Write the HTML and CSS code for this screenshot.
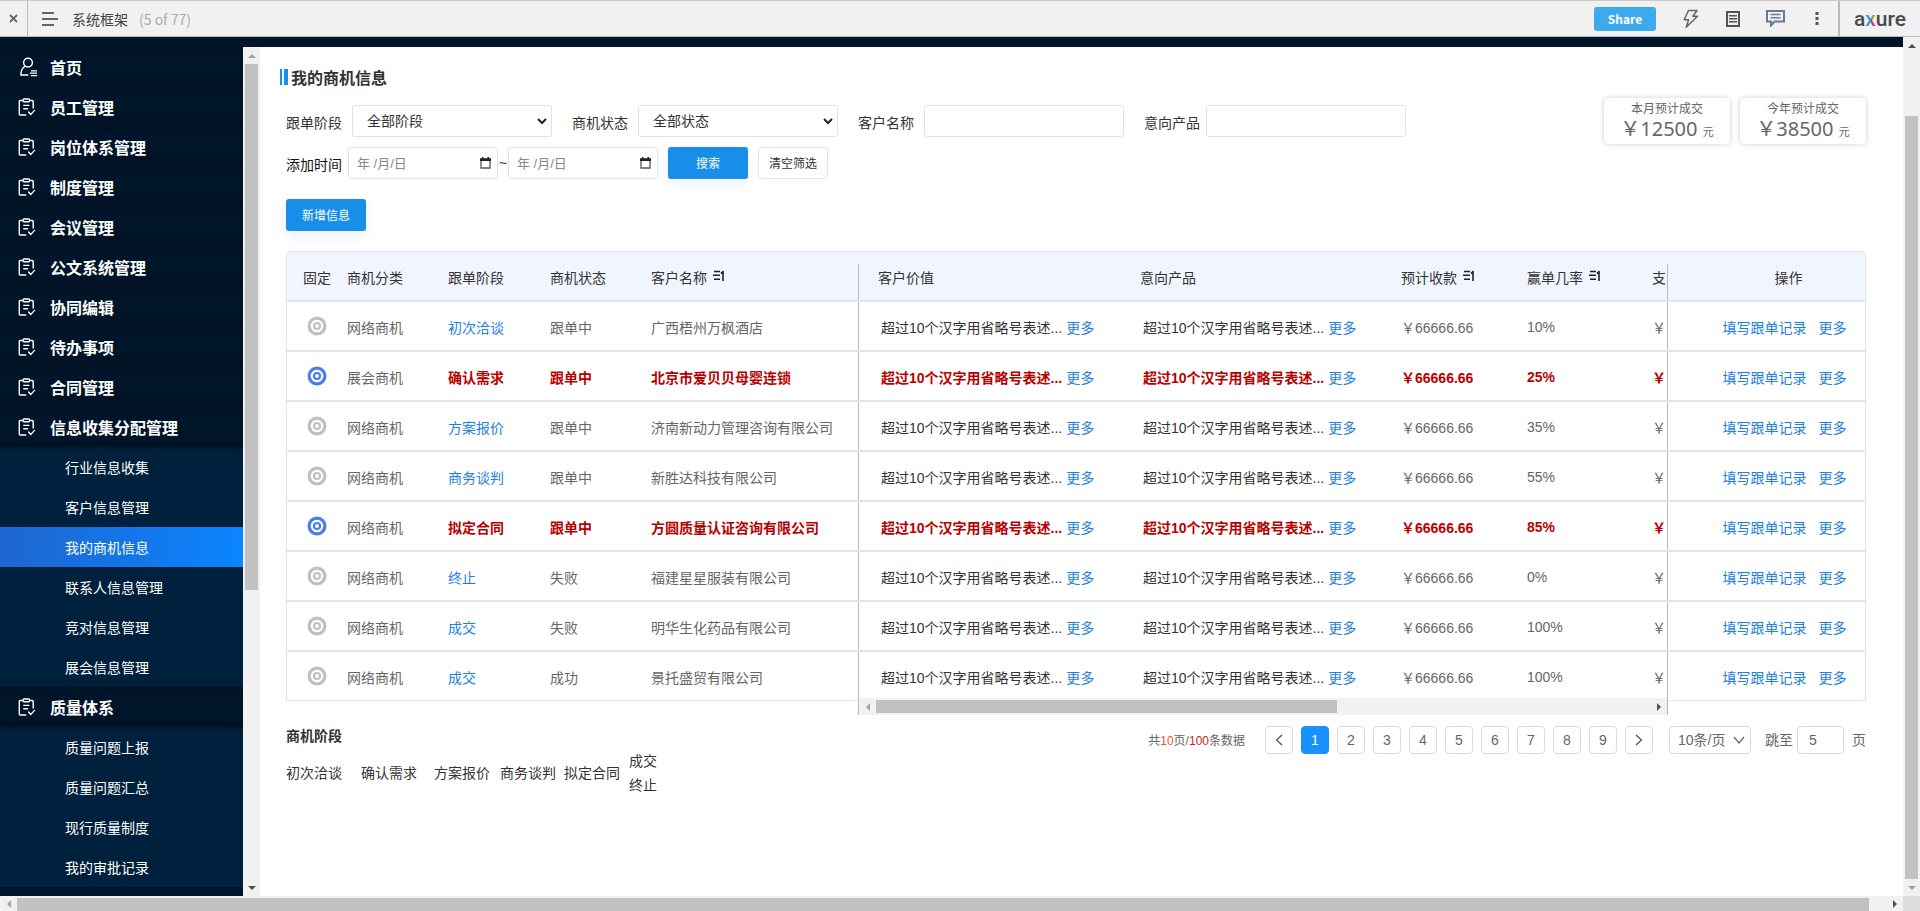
FILE: index.html
```html
<!DOCTYPE html>
<html lang="zh-CN">
<head>
<meta charset="utf-8">
<title>系统框架</title>
<link rel="stylesheet" href="styles.css">
</head>
<body>
<svg class="defs" aria-hidden="true">
  <symbol id="i-task" viewBox="0 0 18 18">
    <g fill="none" stroke="#fff" stroke-width="1.4" stroke-linecap="round" stroke-linejoin="round">
      <path d="M4.500 2.500H2.200Q1.300 2.500 1.300 3.400V16q0 1 .9 1H7.800M12 2.500h2.300q.9 0 .9.9V10"/>
      <rect x="5" y="1" width="6.600" height="2.800" rx="1"/>
      <path d="M5.800 7.400h5M5.800 10.800h3.600M10.600 14l2.300 2.400 3.600-4"/>
    </g>
  </symbol>
  <symbol id="i-pin" viewBox="0 0 20 20">
    <g fill="none" stroke="currentColor">
      <circle cx="10" cy="10" r="7.900" stroke-width="3.200"/>
      <circle cx="10" cy="10" r="3" stroke-width="2.200"/>
    </g>
  </symbol>
  <symbol id="i-sort" viewBox="0 0 12 11">
    <path d="M1 1.500h6M0 5.300h7M1 9.200h6M10 11V1.200M10.400 1L8 3.600" fill="none" stroke="#222" stroke-width="1.600"/>
  </symbol>
</svg>

<header class="topbar">
  <button class="close" aria-label="关闭"><svg width="9" height="9" viewBox="0 0 9 9"><path d="M1 1l7 7M8 1l-7 7" stroke="#666" stroke-width="1.800"/></svg></button>
  <button class="menu" aria-label="菜单"><svg width="16" height="14" viewBox="0 0 16 14"><path d="M0 1h12M0 7h16M0 13h12" stroke="#666" stroke-width="2"/></svg></button>
  <span class="doc-name">系统框架</span>
  <span class="doc-count">(5 of 77)</span>
  <div class="tools">
    <button class="share">Share</button>
    <button aria-label="交互"><svg width="18" height="20" viewBox="0 0 18 20"><path d="M6.500 1.500H15L10.800 7.200h4.700L4.200 18.200l2.400-7.400H2.200z" fill="none" stroke="#666" stroke-width="1.500" stroke-linejoin="round"/></svg></button>
    <button aria-label="说明"><svg width="14" height="16" viewBox="0 0 14 16"><path d="M1 1h12v14H1z" fill="none" stroke="#555" stroke-width="2"/><path d="M3 4.800h8M3 7.800h8M3 10.800h8" stroke="#555" stroke-width="1.400"/></svg></button>
    <button aria-label="评论"><svg width="19" height="17" viewBox="0 0 19 17"><path d="M1 1h17v10.500H8.500L5 15.500v-4H1z" fill="none" stroke="#6a7a96" stroke-width="2"/><path d="M4.500 4.600h10M4.500 7.800h10" stroke="#6a7a96" stroke-width="1.500"/></svg></button>
    <button class="dots" aria-label="更多"><svg width="4" height="13" viewBox="0 0 4 13"><path d="M.5 0h3v3h-3zM.5 5h3v3h-3zM.5 10h3v3h-3z" fill="#555"/></svg></button>
  </div>
  <a class="logo" href="#">a<span class="logo-x">x</span>ure</a>
</header>

<div class="frame">
  <div class="page">
    <div class="strip"></div>
    <div class="cols">
      <nav class="side">
        <a class="item" href="#"><svg class="ico user" viewBox="0 0 18 20"><g fill="none" stroke="#fff" stroke-width="1.400" stroke-linecap="round"><circle cx="8" cy="5.600" r="4.400"/><path d="M5.300 9.400Q.9 11.200 .9 18h7"/><path d="M11 13.800h6M10 16.200h7M11 18.600h6" stroke-width="1.200" stroke-linecap="butt"/></g></svg>首页</a>
        <a class="item" href="#"><svg class="ico"><use href="#i-task"/></svg>员工管理</a>
        <a class="item" href="#"><svg class="ico"><use href="#i-task"/></svg>岗位体系管理</a>
        <a class="item" href="#"><svg class="ico"><use href="#i-task"/></svg>制度管理</a>
        <a class="item" href="#"><svg class="ico"><use href="#i-task"/></svg>会议管理</a>
        <a class="item" href="#"><svg class="ico"><use href="#i-task"/></svg>公文系统管理</a>
        <a class="item" href="#"><svg class="ico"><use href="#i-task"/></svg>协同编辑</a>
        <a class="item" href="#"><svg class="ico"><use href="#i-task"/></svg>待办事项</a>
        <a class="item" href="#"><svg class="ico"><use href="#i-task"/></svg>合同管理</a>
        <a class="item" href="#"><svg class="ico"><use href="#i-task"/></svg>信息收集分配管理</a>
        <div class="sub">
          <a href="#">行业信息收集</a>
          <a href="#">客户信息管理</a>
          <a class="active" href="#">我的商机信息</a>
          <a href="#">联系人信息管理</a>
          <a href="#">竞对信息管理</a>
          <a href="#">展会信息管理</a>
        </div>
        <a class="item" href="#"><svg class="ico"><use href="#i-task"/></svg>质量体系</a>
        <div class="sub">
          <a href="#">质量问题上报</a>
          <a href="#">质量问题汇总</a>
          <a href="#">现行质量制度</a>
          <a href="#">我的审批记录</a>
        </div>
      </nav>
      <div class="vbar side-bar"><i class="up off"></i><b></b><i class="down"></i></div>

      <main class="main">
        <h1 class="title"><span class="bars"></span>我的商机信息</h1>
        <div class="top">
          <form class="filters">
            <div class="line">
              <div class="field"><label for="stage">跟单阶段</label><select id="stage"><option>全部阶段</option></select></div>
              <div class="field"><label for="state">商机状态</label><select id="state"><option>全部状态</option></select></div>
              <div class="field"><label for="client">客户名称</label><input id="client" type="text"></div>
              <div class="field tight"><label for="product">意向产品</label><input id="product" type="text"></div>
            </div>
            <div class="line second">
              <div class="field tight"><label class="dark" for="from">添加时间</label><div class="range"><input class="date" id="from" type="text" placeholder="年 /月/日"><span>~</span><input class="date" type="text" placeholder="年 /月/日" aria-label="结束时间"></div></div>
              <button class="btn primary" type="button">搜索</button>
              <button class="btn plain" type="button">清空筛选</button>
            </div>
          </form>
          <div class="cards">
            <section class="card"><h2>本月预计成交</h2><p>￥12500 <small>元</small></p></section>
            <section class="card"><h2>今年预计成交</h2><p>￥38500 <small>元</small></p></section>
          </div>
        </div>
        <button class="btn primary add" type="button">新增信息</button>

        <div class="board">
          <table>
            <colgroup><col class="c1"><col class="c2"><col class="c3"><col class="c2"><col class="c5"><col class="c6"><col class="c7"><col class="c8"><col class="c9"><col class="c10"><col class="c11"></colgroup>
            <thead>
              <tr><th class="pin">固定</th><th>商机分类</th><th>跟单阶段</th><th>商机状态</th><th class="edge">客户名称 <svg class="sort"><use href="#i-sort"/></svg></th><th class="mid">客户价值</th><th class="mid">意向产品</th><th class="mid">预计收款 <svg class="sort"><use href="#i-sort"/></svg></th><th class="mid">赢单几率 <svg class="sort"><use href="#i-sort"/></svg></th><th class="mid edge">支</th><th class="ops">操作</th></tr>
            </thead>
            <tbody>
              <tr><td class="pin"><button aria-label="固定"><svg><use href="#i-pin"/></svg></button></td><td>网络商机</td><td><a href="#">初次洽谈</a></td><td>跟单中</td><td class="edge">广西梧州万枫酒店</td><td class="long">超过10个汉字用省略号表述... <a href="#">更多</a></td><td class="long">超过10个汉字用省略号表述... <a href="#">更多</a></td><td class="mid">￥66666.66</td><td class="mid pct">10%</td><td class="mid edge">￥</td><td class="ops"><a href="#">填写跟单记录</a><a href="#">更多</a></td></tr>
              <tr class="hot"><td class="pin"><button aria-label="取消固定"><svg><use href="#i-pin"/></svg></button></td><td class="calm">展会商机</td><td>确认需求</td><td>跟单中</td><td class="edge">北京市爱贝贝母婴连锁</td><td class="long">超过10个汉字用省略号表述... <a href="#">更多</a></td><td class="long">超过10个汉字用省略号表述... <a href="#">更多</a></td><td class="mid">￥66666.66</td><td class="mid pct">25%</td><td class="mid edge">￥</td><td class="ops"><a href="#">填写跟单记录</a><a href="#">更多</a></td></tr>
              <tr><td class="pin"><button aria-label="固定"><svg><use href="#i-pin"/></svg></button></td><td>网络商机</td><td><a href="#">方案报价</a></td><td>跟单中</td><td class="edge">济南新动力管理咨询有限公司</td><td class="long">超过10个汉字用省略号表述... <a href="#">更多</a></td><td class="long">超过10个汉字用省略号表述... <a href="#">更多</a></td><td class="mid">￥66666.66</td><td class="mid pct">35%</td><td class="mid edge">￥</td><td class="ops"><a href="#">填写跟单记录</a><a href="#">更多</a></td></tr>
              <tr><td class="pin"><button aria-label="固定"><svg><use href="#i-pin"/></svg></button></td><td>网络商机</td><td><a href="#">商务谈判</a></td><td>跟单中</td><td class="edge">新胜达科技有限公司</td><td class="long">超过10个汉字用省略号表述... <a href="#">更多</a></td><td class="long">超过10个汉字用省略号表述... <a href="#">更多</a></td><td class="mid">￥66666.66</td><td class="mid pct">55%</td><td class="mid edge">￥</td><td class="ops"><a href="#">填写跟单记录</a><a href="#">更多</a></td></tr>
              <tr class="hot"><td class="pin"><button aria-label="取消固定"><svg><use href="#i-pin"/></svg></button></td><td class="calm">网络商机</td><td>拟定合同</td><td>跟单中</td><td class="edge">方圆质量认证咨询有限公司</td><td class="long">超过10个汉字用省略号表述... <a href="#">更多</a></td><td class="long">超过10个汉字用省略号表述... <a href="#">更多</a></td><td class="mid">￥66666.66</td><td class="mid pct">85%</td><td class="mid edge">￥</td><td class="ops"><a href="#">填写跟单记录</a><a href="#">更多</a></td></tr>
              <tr><td class="pin"><button aria-label="固定"><svg><use href="#i-pin"/></svg></button></td><td>网络商机</td><td><a href="#">终止</a></td><td>失败</td><td class="edge">福建星星服装有限公司</td><td class="long">超过10个汉字用省略号表述... <a href="#">更多</a></td><td class="long">超过10个汉字用省略号表述... <a href="#">更多</a></td><td class="mid">￥66666.66</td><td class="mid pct">0%</td><td class="mid edge">￥</td><td class="ops"><a href="#">填写跟单记录</a><a href="#">更多</a></td></tr>
              <tr><td class="pin"><button aria-label="固定"><svg><use href="#i-pin"/></svg></button></td><td>网络商机</td><td><a href="#">成交</a></td><td>失败</td><td class="edge">明华生化药品有限公司</td><td class="long">超过10个汉字用省略号表述... <a href="#">更多</a></td><td class="long">超过10个汉字用省略号表述... <a href="#">更多</a></td><td class="mid">￥66666.66</td><td class="mid pct">100%</td><td class="mid edge">￥</td><td class="ops"><a href="#">填写跟单记录</a><a href="#">更多</a></td></tr>
              <tr><td class="pin"><button aria-label="固定"><svg><use href="#i-pin"/></svg></button></td><td>网络商机</td><td><a href="#">成交</a></td><td>成功</td><td class="edge">景托盛贸有限公司</td><td class="long">超过10个汉字用省略号表述... <a href="#">更多</a></td><td class="long">超过10个汉字用省略号表述... <a href="#">更多</a></td><td class="mid">￥66666.66</td><td class="mid pct">100%</td><td class="mid edge">￥</td><td class="ops"><a href="#">填写跟单记录</a><a href="#">更多</a></td></tr>
            </tbody>
          </table>
          <div class="hbar table-bar"><i class="left off"></i><b></b><i class="right"></i></div>
        </div>

        <div class="foot">
          <section class="stages">
            <h2>商机阶段</h2>
            <div class="steps"><span>初次洽谈</span><span>确认需求</span><span>方案报价</span><span>商务谈判</span><span>拟定合同</span><span class="ends"><span>成交</span><span>终止</span></span></div>
          </section>
          <div class="pager">
            <span class="total">共<em>10</em>页/<strong>100</strong>条数据</span>
            <div class="nums">
              <button aria-label="上一页"><svg width="8" height="12" viewBox="0 0 8 12"><path d="M7 1L1.500 6 7 11" fill="none" stroke="#555" stroke-width="1.300"/></svg></button>
              <button class="on">1</button><button>2</button><button>3</button><button>4</button><button>5</button><button>6</button><button>7</button><button>8</button><button>9</button>
              <button aria-label="下一页"><svg width="8" height="12" viewBox="0 0 8 12"><path d="M1 1l5.500 5L1 11" fill="none" stroke="#555" stroke-width="1.300"/></svg></button>
            </div>
            <select class="size" aria-label="每页条数"><option>10条/页</option></select>
            <div class="jump"><label for="jump">跳至</label><input id="jump" type="text" value="5"><span>页</span></div>
          </div>
        </div>
      </main>
    </div>
  </div>
  <div class="vbar page-bar"><i class="up"></i><b></b><i class="down off"></i></div>
  <div class="hbar bottom-bar"><i class="left off"></i><b></b><i class="right"></i></div>
  <div class="corner"></div>
</div>
</body>
</html>
```
FILE: styles.css
```css
* { box-sizing: border-box; }
body {
  margin: 0;
  height: 100vh;
  display: flex;
  flex-direction: column;
  overflow: hidden;
  background: #fff;
  color: #333;
  font: 14px/20px "Liberation Sans", "Noto Sans CJK SC", sans-serif;
}
h1, h2, p { margin: 0; }
a { color: #1f80e0; text-decoration: none; }
button, input, select { font: inherit; color: inherit; }
button { padding: 0; border: 0; background: none; }
svg { display: block; }
.defs { position: absolute; width: 0; height: 0; }

/* top bar */
.topbar {
  display: flex;
  align-items: center;
  flex: none;
  height: 37px;
  border-top: 1px solid #ccc;
  border-bottom: 1px solid #bbb;
  background: #f1f1f1;
  font-family: "Noto Sans CJK SC", sans-serif;
}
.close {
  display: flex;
  align-items: center;
  justify-content: center;
  width: 28px;
  height: 100%;
  border-right: 1px solid #bbb;
}
.menu { margin: 0 14px; }
.doc-name { color: #444; }
.doc-count { margin-left: 11px; color: #aaa; }
.tools { display: flex; align-items: center; gap: 26px; margin-left: auto; padding-right: 19px; }
.dots { margin-left: 4px; }
.share {
  width: 62px;
  height: 24px;
  border-radius: 3px;
  background: #3eaaee;
  color: #fff;
  font-size: 12px;
  font-weight: 700;
}
.logo {
  display: flex;
  align-items: center;
  justify-content: center;
  width: 82px;
  height: 100%;
  border-left: 2px solid #bbb;
  color: #4a4a4a;
  font: 500 21px/30px Roboto, sans-serif;
}
.logo-x {
  background: conic-gradient(#7cb82f 0 90deg, #e5267f 90deg 180deg, #1ba1dc 180deg);
  -webkit-background-clip: text;
  background-clip: text;
  color: transparent;
}

/* frame */
.frame {
  flex: 1;
  min-height: 0;
  display: grid;
  grid-template: minmax(0, 1fr) 15px / minmax(0, 1fr) 17px;
}
.page { display: flex; flex-direction: column; min-height: 0; }
.strip { flex: none; height: 10px; background: #001529; }
.cols { display: flex; flex: 1; min-height: 0; }

/* scroll bars */
.vbar, .hbar { display: flex; align-items: center; background: #f1f1f1; }
.vbar { flex-direction: column; width: 17px; }
.vbar b { width: 13px; background: #c1c1c1; }
.hbar b { align-self: stretch; margin: 2px 0; background: #c1c1c1; }
.vbar i, .hbar i { flex: none; width: 17px; height: 17px; display: grid; place-items: center; }
.hbar i { height: 15px; }
.vbar i::before, .hbar i::before { content: ""; border: 4px solid transparent; }
.vbar .up::before { border-top: 0; border-bottom-color: #505050; }
.vbar .down::before { border-bottom: 0; border-top-color: #505050; }
.hbar .left::before { border-left: 0; border-right-color: #505050; }
.hbar .right::before { border-right: 0; border-left-color: #505050; }
.vbar .up.off::before { border-bottom-color: #a3a3a3; }
.vbar .down.off::before { border-top-color: #a3a3a3; }
.hbar .left.off::before { border-right-color: #a3a3a3; }
.side-bar { flex: none; }
.side-bar b { height: 62%; margin-bottom: auto; }
.page-bar b { height: 763px; flex: 0 1 auto; margin-top: auto; }
.bottom-bar b { flex: 1; margin: 2px 17px 0 0; }
.corner { background: #dcdcdc; }

/* side menu */
.side {
  flex: none;
  width: 243px;
  overflow: hidden;
  background: #001529;
}
.item, .sub a { display: flex; align-items: center; height: 40px; color: #fff; }
.item {
  position: relative;
  gap: 13px;
  padding: 4px 0 0 18px;
  background: linear-gradient(#001222, #001529 8px, #001529 32px, #001222);
  box-shadow: 0 1px 8px #00122499;
  font-size: 16px;
  font-weight: 700;
}
.ico { width: 18px; height: 18px; margin: -4px 1px 0 0; }
.ico.user { width: 18px; height: 20px; margin-left: 2px; margin-right: -1px; }
.sub { background: #00213d; }
.sub a { padding: 2px 0 0 65px; }
.sub .active { background: linear-gradient(90deg, #1e66cf, #0a84ff); }

/* content */
.main { flex: 1; min-width: 0; padding: 22px 37px 0 26px; overflow: hidden; }
.title {
  display: flex;
  align-items: center;
  gap: 3px;
  margin: 0 0 9px -6px;
  font-size: 16px;
  line-height: 20px;
}
.bars {
  align-self: flex-start;
  width: 8px;
  height: 16px;
  background: linear-gradient(90deg, #1890e8 2px, #fff 2px 4px, #1890e8 4px);
}
.top { display: flex; justify-content: space-between; align-items: flex-start; }
.filters { padding-top: 7px; }
.line { display: flex; gap: 20px; }
.second { gap: 10px; margin-top: 10px; }
.field { display: flex; align-items: center; gap: 10px; }
.tight { gap: 6px; }
.field label { flex: none; padding-top: 3px; }
.field .dark { color: #111; }
.field select, .field input {
  width: 200px;
  height: 32px;
  padding: 0 14px;
  border: 1px solid #dfe4ea;
  border-radius: 3px;
  background: #fff;
}
.field select {
  appearance: none;
  background: #fff url("data:image/svg+xml,%3Csvg xmlns='http://www.w3.org/2000/svg' width='10' height='7'%3E%3Cpath d='M1 1l4 4 4-4' fill='none' stroke='%23222' stroke-width='2'/%3E%3C/svg%3E") no-repeat right 4px center;
}
.range { display: flex; align-items: center; }
.range span { width: 10px; text-align: center; }
.field .date {
  width: 150px;
  padding: 0 8px;
  font-size: 13px;
  background: #fff url("data:image/svg+xml,%3Csvg xmlns='http://www.w3.org/2000/svg' width='11' height='12'%3E%3Cpath d='M1 2h9v9H1z' fill='none' stroke='%23555' stroke-width='1.3'/%3E%3Cpath d='M0 1.500h11V4H0zM2 0h1.500v2H2zM7.500 0H9v2H7.500z' fill='%23222'/%3E%3C/svg%3E") no-repeat right 6px center;
}
.date::placeholder { color: #888; opacity: 1; }
.btn { height: 32px; padding-top: 1px; border-radius: 3px; font-size: 12px; }
.primary { width: 80px; background: #198ee9; color: #fff; box-shadow: 0 4px 14px #e8effc; }
.plain { width: 70px; border: 1px solid #e2e6ea; background: #fff; }
.add { display: block; margin: 20px 0; }

.cards { display: flex; gap: 10px; color: #666; }
.card {
  width: 126px;
  height: 46px;
  padding-top: 3px;
  border-radius: 4px;
  box-shadow: 0 0 5px #ccc;
  text-align: center;
}
.card h2 { font-size: 12px; font-weight: 400; line-height: 16px; }
.card p { font: 20px/24px "Noto Sans", "Noto Sans CJK SC", sans-serif; }
.card small { font-size: 11px; }

/* table */
.board { position: relative; border: 1px solid #dfe5ec; border-radius: 5px 5px 0 0; }
table { width: 100%; table-layout: fixed; border-collapse: separate; border-spacing: 0; }
.c1 { width: 60px; }
.c2 { width: 101px; }
.c3 { width: 102px; }
.c5 { width: 208px; }
.c6 { width: 262px; }
.c7 { width: 261px; }
.c8 { width: 126px; }
.c9 { width: 125px; }
.c10 { width: 35px; }
.c11 { width: 197px; }
th, td {
  height: 50px;
  padding: 4px 0 0;
  border-bottom: 2px solid #dfe5ec;
  text-align: left;
  font-weight: 400;
  white-space: nowrap;
}
td { color: #666; }
th { padding-top: 3px; background-color: #f0f5ff; }
th:first-child { border-top-left-radius: 4px; }
th:last-child { border-top-right-radius: 4px; }
tbody tr:last-child td { height: 48px; border-bottom: 0; }
.edge {
  background-image: linear-gradient(#bbb, #bbb);
  background-repeat: no-repeat;
  background-position: right bottom;
  background-size: 1px 100%;
  background-origin: border-box;
}
th.edge { background-size: 1px calc(100% - 12px); }
.mid { padding-left: 19px; }
.long { padding-left: 22px; color: #333; }
.pct { padding-top: 2px; }
.pin { text-align: center; }
td.pin { padding: 0 0 2px; color: #bfbfbf; }
.pin button { vertical-align: middle; }
.pin svg { width: 20px; height: 20px; }
.ops { padding-left: 36px; text-align: center; }
th.ops { padding-left: 44px; }
.ops a + a { margin-left: 12px; }
.sort { display: inline-block; width: 12px; height: 11px; margin: 0 0 2px 2px; }
.hot td { color: #b80000; font-weight: 700; }
.hot td.calm { color: #666; font-weight: 400; }
.hot td.pin { color: #4a7ee8; }
.hot a { font-weight: 400; }
.table-bar {
  position: absolute;
  left: 571px;
  right: 197px;
  bottom: -15px;
  height: 17px;
  border: solid #bbb;
  border-width: 0 1px;
}
.table-bar b { width: 57%; margin-right: auto; }

/* footer */
.foot { display: flex; justify-content: space-between; align-items: flex-start; padding-top: 25px; }
.stages h2 { font-size: 14px; line-height: 20px; }
.steps {
  display: grid;
  grid-template-columns: 75px 73px 66px 64px 65px auto;
  align-items: center;
  margin-top: 5px;
}
.ends { display: grid; row-gap: 4px; }
.pager { display: flex; align-items: center; color: #666; }
.total { margin-right: 20px; padding-top: 2px; font-size: 12px; }
.total em { color: #f0503c; font-style: normal; }
.total strong { color: #d0241c; font-weight: 400; }
.nums { display: flex; gap: 8px; }
.nums button, .size, .jump input {
  height: 28px;
  border: 1px solid #d9d9d9;
  border-radius: 4px;
  background: #fff;
}
.nums button { display: grid; place-items: center; width: 28px; }
.nums .on { border-color: #1890ff; background: #1890ff; color: #fff; }
.size {
  appearance: none;
  width: 82px;
  margin: 0 14px 0 16px;
  padding: 0 0 0 8px;
  background: #fff url("data:image/svg+xml,%3Csvg xmlns='http://www.w3.org/2000/svg' width='12' height='8'%3E%3Cpath d='M1 1l5 6 5-6' fill='none' stroke='%23666' stroke-width='1.200'/%3E%3C/svg%3E") no-repeat right 5px center;
}
.jump { display: flex; align-items: center; }
.jump input { width: 47px; margin: 0 8px 0 4px; padding: 0 11px; }
```
